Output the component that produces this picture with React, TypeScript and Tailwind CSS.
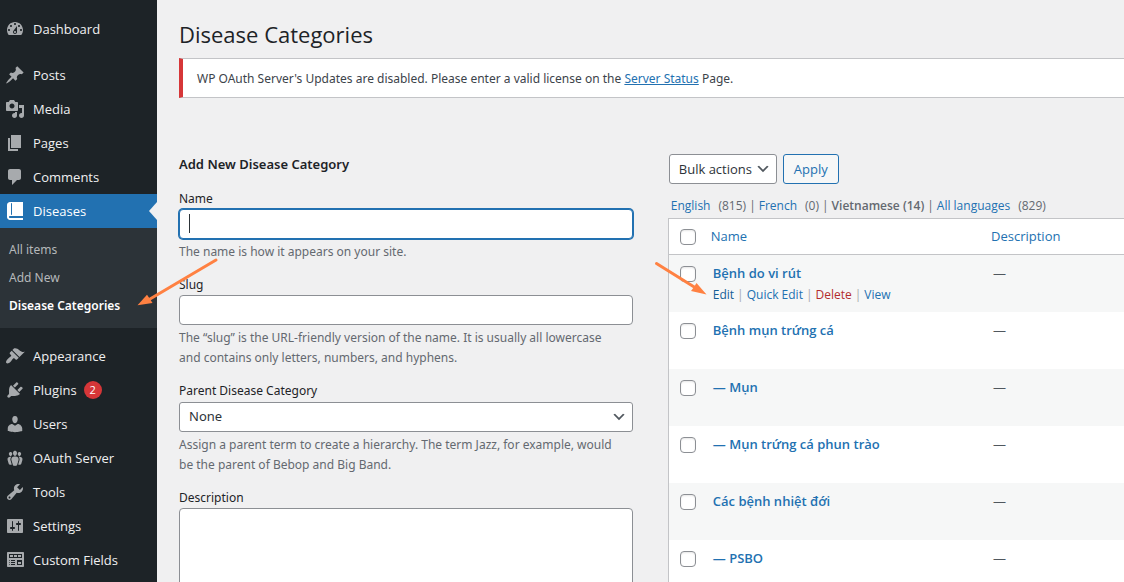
import type { ReactNode } from "react";

const icons = {
  dashboard:
    "M3.76 16h12.48c1.1-1.37 1.76-3.11 1.76-5 0-4.42-3.58-8-8-8s-8 3.58-8 8c0 1.89.66 3.63 1.76 5zM10 4c.55 0 1 .45 1 1s-.45 1-1 1-1-.45-1-1 .45-1 1-1zM6 6c.55 0 1 .45 1 1s-.45 1-1 1-1-.45-1-1 .45-1 1-1zm8 0c.55 0 1 .45 1 1s-.45 1-1 1-1-.45-1-1 .45-1 1-1zm-5.37 5.55L12 7v6c0 1.1-.9 2-2 2s-2-.9-2-2c0-.57.24-1.08.63-1.45zM4 10c.55 0 1 .45 1 1s-.45 1-1 1-1-.45-1-1 .45-1 1-1zm12 0c.55 0 1 .45 1 1s-.45 1-1 1-1-.45-1-1 .45-1 1-1zm-5 3c0-.55-.45-1-1-1s-1 .45-1 1 .45 1 1 1 1-.45 1-1z",
  post: "M10.44 3.02l1.82-1.82 6.36 6.35-1.83 1.82c-1.05-.68-2.48-.57-3.41.36l-.75.75c-.92.93-1.04 2.35-.35 3.41l-1.83 1.82-2.41-2.41-2.8 2.79c-.42.42-3.38 2.71-3.8 2.29s1.86-3.39 2.28-3.81l2.79-2.79L4.1 9.36l1.83-1.82c1.05.69 2.48.57 3.4-.36l.75-.75c.93-.92 1.05-2.35.36-3.41z",
  media:
    "M13 11V4c0-.55-.45-1-1-1h-1.67L9 1H5L3.67 3H2c-.55 0-1 .45-1 1v7c0 .55.45 1 1 1h10c.55 0 1-.45 1-1zM7 4.5c1.38 0 2.5 1.12 2.5 2.5S8.38 9.5 7 9.5 4.5 8.38 4.5 7 5.62 4.5 7 4.5zM14 6h5v10.5c0 1.38-1.12 2.5-2.5 2.5S14 17.88 14 16.5s1.12-2.5 2.5-2.5c.17 0 .34.02.5.05V9h-3V6zm-4 8.05V13h2v3.5c0 1.38-1.12 2.5-2.5 2.5S7 17.88 7 16.5 8.12 14 9.5 14c.17 0 .34.02.5.05z",
  page: "M6 15V2h10v13H6zm-1 1h8v2H3V5h2v11z",
  comments:
    "M5 2h9c1.1 0 2 .9 2 2v7c0 1.1-.9 2-2 2h-2l-5 5v-5H5c-1.1 0-2-.9-2-2V4c0-1.1.9-2 2-2z",
  book: "M5 17h13v2H5c-1.66 0-3-1.34-3-3V4c0-1.66 1.34-3 3-3h13v14H5c-.55 0-1 .45-1 1s.45 1 1 1zm2-3.5v-11c0-.28-.22-.5-.5-.5s-.5.22-.5.5v11c0 .28.22.5.5.5s.5-.22.5-.5z",
  appearance:
    "M14.48 11.06L7.41 3.99l1.5-1.5c.5-.56 2.3-.47 3.51.32 1.21.8 1.43 1.28 2.91 2.1 1.18.64 2.45 1.26 4.45.85zm-.71.71L6.7 4.7 4.93 6.47c-.39.39-.39 1.02 0 1.41l1.06 1.06c.39.39.39 1.03 0 1.42-.6.6-1.43 1.11-2.21 1.69-.35.26-.7.53-1.01.84C1.43 14.23.4 16.08 1.4 17.07c.99 1 2.84-.03 4.18-1.36.31-.31.58-.66.85-1.02.57-.78 1.08-1.61 1.69-2.21.39-.39 1.02-.39 1.41 0l1.06 1.06c.39.39 1.02.39 1.41 0z",
  plugins:
    "M13.11 4.36L9.87 7.6 8 5.73l3.24-3.24c.35-.34 1.05-.2 1.56.32.52.51.66 1.21.31 1.55zm-8 1.77l.91-1.12 9.01 9.01-1.19.84c-.71.71-2.63 1.16-3.82 1.16H6.14L4.9 17.26c-.59.59-1.54.59-2.12 0-.59-.58-.59-1.53 0-2.12l1.24-1.24v-3.88c0-1.13.4-3.19 1.09-3.89zm7.26 3.97l3.24-3.24c.34-.35 1.04-.21 1.55.31.52.51.66 1.21.31 1.55l-3.24 3.25z",
  users:
    "M10 9.25c-2.27 0-2.73-3.44-2.73-3.44C7 4.02 7.82 2 9.97 2c2.16 0 2.98 2.02 2.71 3.81 0 0-.41 3.44-2.68 3.44zm0 2.57L12.72 10c2.39 0 4.52 2.33 4.52 4.53v2.49s-3.65 1.13-7.24 1.13c-3.65 0-7.24-1.13-7.24-1.13v-2.49c0-2.25 1.94-4.48 4.47-4.48z",
  groups:
    "M8.03 4.46c-.29 1.28.55 3.46 1.97 3.46 1.41 0 2.25-2.18 1.96-3.46-.22-.98-1.08-1.63-1.96-1.63-.89 0-1.74.65-1.97 1.63zm-4.13.9c-.25 1.08.47 2.93 1.67 2.93s1.92-1.85 1.67-2.93c-.19-.83-.92-1.39-1.67-1.39s-1.48.56-1.67 1.39zm8.86 0c-.25 1.08.47 2.93 1.66 2.93 1.2 0 1.92-1.85 1.67-2.93-.19-.83-.92-1.39-1.67-1.39-.74 0-1.47.56-1.66 1.39zm-.59 11.43l1.25-4.3C14.2 10 12.71 8.47 10 8.47c-2.72 0-4.21 1.53-3.44 4.02l1.26 4.3C8.05 17.51 9 18 10 18c.98 0 1.94-.49 2.17-1.21zm-6.1-7.63c-.49.67-.96 1.83-.42 3.59l1.12 3.79c-.34.2-.77.31-1.2.31-.85 0-1.65-.41-1.85-1.03l-1.07-3.65c-.65-2.11.61-3.4 2.92-3.4.27 0 .54.02.79.06-.1.1-.2.22-.29.33zm8.35-.39c2.31 0 3.58 1.29 2.92 3.4l-1.07 3.65c-.2.62-1 1.03-1.85 1.03-.43 0-.86-.11-1.2-.31l1.11-3.77c.55-1.78.08-2.94-.42-3.61-.08-.11-.18-.23-.28-.33.25-.04.51-.06.79-.06z",
  tools:
    "M16.68 9.77c-1.34 1.34-3.3 1.67-4.95.99l-5.41 6.52c-.99.99-2.59.99-3.58 0s-.99-2.59 0-3.57l6.52-5.42c-.68-1.65-.35-3.61.99-4.95 1.28-1.28 3.12-1.62 4.72-1.06l-2.89 2.89 2.82 2.82 2.86-2.87c.53 1.58.18 3.39-1.08 4.65zM3.81 16.21c.4.39 1.04.39 1.43 0 .4-.4.4-1.04 0-1.43-.39-.4-1.03-.4-1.43 0-.39.39-.39 1.03 0 1.43z",
  settings:
    "M18 16V4c0-.55-.45-1-1-1H3c-.55 0-1 .45-1 1v12c0 .55.45 1 1 1h14c.55 0 1-.45 1-1zM8 11h1c.55 0 1 .45 1 1s-.45 1-1 1H8v1.5c0 .28-.22.5-.5.5s-.5-.22-.5-.5V13H6c-.55 0-1-.45-1-1s.45-1 1-1h1V5.5c0-.28.22-.5.5-.5s.5.22.5.5V11zm5-2h-1c-.55 0-1-.45-1-1s.45-1 1-1h1V5.5c0-.28.22-.5.5-.5s.5.22.5.5V7h1c.55 0 1 .45 1 1s-.45 1-1 1h-1v5.5c0 .28-.22.5-.5.5s-.5-.22-.5-.5V9z",
  fields:
    "M19 16V3c0-.55-.45-1-1-1H3c-.55 0-1 .45-1 1v13c0 .55.45 1 1 1h15c.55 0 1-.45 1-1zM4 4h13v4H4V4zm1 1v2h3V5H5zm4 0v2h3V5H9zm4 0v2h3V5h-3zm-8.5 5c.28 0 .5.22.5.5s-.22.5-.5.5-.5-.22-.5-.5.22-.5.5-.5zM6 10h4v1H6v-1zm6 0h5v5h-5v-5zm-7.5 2c.28 0 .5.22.5.5s-.22.5-.5.5-.5-.22-.5-.5.22-.5.5-.5zM6 12h4v1H6v-1zm7 0v2h3v-2h-3zm-8.5 2c.28 0 .5.22.5.5s-.22.5-.5.5-.5-.22-.5-.5.22-.5.5-.5zM6 14h4v1H6v-1z",
};

type IconName = keyof typeof icons;

function MenuItem({
  icon,
  label,
  count,
  current = false,
}: {
  icon: IconName;
  label: string;
  count?: number;
  current?: boolean;
}) {
  return (
    <a
      href="#"
      aria-current={current ? "true" : undefined}
      className={
        current
          ? "relative flex h-[34px] items-center gap-2 bg-[#2271b1] pl-[5px] text-white"
          : "flex h-[34px] items-center gap-2 pl-[5px] text-[#f0f0f1]"
      }
    >
      <svg
        viewBox="0 0 20 20"
        aria-hidden="true"
        fillRule="evenodd"
        className={current ? "size-5 fill-white" : "size-5 fill-[#a7aaad]"}
      >
        <path d={icons[icon]} />
      </svg>
      <span className="pt-0.5">{label}</span>
      {count !== undefined && (
        <span className="-ml-px flex size-[18px] items-center justify-center rounded-full bg-[#d63638] text-[11px] text-white">
          {count}
        </span>
      )}
      {current && (
        <span className="absolute top-2 right-0 border-y-[9px] border-r-8 border-y-transparent border-r-[#f0f0f1]" />
      )}
    </a>
  );
}

function Sidebar() {
  return (
    <nav className="w-[157px] shrink-0 bg-[#1d2327] pt-3 text-[13px]">
      <MenuItem icon="dashboard" label="Dashboard" />
      <div className="mt-3">
        <MenuItem icon="post" label="Posts" />
        <MenuItem icon="media" label="Media" />
        <MenuItem icon="page" label="Pages" />
        <MenuItem icon="comments" label="Comments" />
        <MenuItem icon="book" label="Diseases" current />
      </div>
      <ul className="bg-[#2c3338] pt-2 pb-2 pl-[9px] font-['Noto_Sans',sans-serif] text-xs leading-7 text-[#b5b8ba]">
        <li>
          <a href="#">All items</a>
        </li>
        <li>
          <a href="#">Add New</a>
        </li>
        <li>
          <a href="#" className="font-semibold text-white">
            Disease Categories
          </a>
        </li>
      </ul>
      <div className="mt-[11px]">
        <MenuItem icon="appearance" label="Appearance" />
        <MenuItem icon="plugins" label="Plugins" count={2} />
        <MenuItem icon="users" label="Users" />
        <MenuItem icon="groups" label="OAuth Server" />
        <MenuItem icon="tools" label="Tools" />
        <MenuItem icon="settings" label="Settings" />
        <MenuItem icon="fields" label="Custom Fields" />
      </div>
    </nav>
  );
}

function Chevron() {
  return (
    <svg
      viewBox="0 0 20 20"
      aria-hidden="true"
      className="pointer-events-none absolute right-1.5 bottom-[7px] size-4 fill-[#50575e]"
    >
      <path d="M5 6l5 5 5-5 2 1-7 7-7-7 2-1z" />
    </svg>
  );
}

function Field({
  id,
  label,
  help,
  children,
}: {
  id: string;
  label: string;
  help?: string;
  children: ReactNode;
}) {
  return (
    <div className="mb-[13px]">
      <label htmlFor={id} className="block leading-5 text-[#1d2327]">
        {label}
      </label>
      {children}
      {help && <p className="mt-[3px] w-[97%] leading-5 text-[#646970]">{help}</p>}
    </div>
  );
}

function AddForm() {
  return (
    <form className="pr-[35px] font-['Noto_Sans',sans-serif] text-xs">
      <h2 className="mb-[15px] text-[13px] leading-5 font-semibold text-[#1d2327]">
        Add New Disease Category
      </h2>
      <Field id="name" label="Name" help="The name is how it appears on your site.">
        <div className="relative">
          <input
            id="name"
            type="text"
            className="block h-[30px] w-full rounded border border-[#2271b1] bg-white px-2 ring-1 ring-[#2271b1] outline-none"
          />
          <span className="absolute top-[5px] left-2.5 h-[19px] w-px bg-[#2c3338]" />
        </div>
      </Field>
      <Field
        id="slug"
        label="Slug"
        help="The “slug” is the URL-friendly version of the name. It is usually all lowercase and contains only letters, numbers, and hyphens."
      >
        <input
          id="slug"
          type="text"
          className="block h-[30px] w-full rounded border border-[#8c8f94] bg-white px-2"
        />
      </Field>
      <Field
        id="parent"
        label="Parent Disease Category"
        help="Assign a parent term to create a hierarchy. The term Jazz, for example, would be the parent of Bebop and Big Band."
      >
        <div className="relative pt-px">
          <select
            id="parent"
            className="block h-[30px] w-full appearance-none rounded-[3px] border border-[#8c8f94] bg-white px-[9px] text-[13px] text-[#2c3338]"
          >
            <option>None</option>
          </select>
          <Chevron />
        </div>
      </Field>
      <Field id="description" label="Description">
        <textarea
          id="description"
          rows={5}
          className="block h-28 w-full resize-none rounded border border-[#8c8f94] bg-white px-2"
        />
      </Field>
    </form>
  );
}

function Check({ label }: { label: string }) {
  return (
    <input
      type="checkbox"
      aria-label={label}
      className="block size-4 appearance-none rounded border border-[#8c8f94] bg-white shadow-[inset_0_1px_2px_rgba(0,0,0,0.1)]"
    />
  );
}

const terms = [
  "Bệnh do vi rút",
  "Bệnh mụn trứng cá",
  "— Mụn",
  "— Mụn trứng cá phun trào",
  "Các bệnh nhiệt đới",
  "— PSBO",
];

function RowActions() {
  return (
    <div className="flex gap-[3px] pt-px text-xs leading-5 text-[#a7aaad]">
      <a href="#" className="text-[#135e96]">
        Edit
      </a>
      |
      <a href="#" className="text-[#2271b1]">
        Quick Edit
      </a>
      |
      <a href="#" className="text-[#b32d2e]">
        Delete
      </a>
      |
      <a href="#" className="text-[#2271b1]">
        View
      </a>
    </div>
  );
}

function TermList() {
  return (
    <section className="min-w-0">
      <div className="flex gap-1.5 pl-px text-[13px]">
        <div className="relative">
          <select
            aria-label="Bulk actions"
            className="block h-[30px] w-[108px] appearance-none rounded-[3px] border border-[#8c8f94] bg-white pt-px pl-[9px] text-[#2c3338]"
          >
            <option>Bulk actions</option>
          </select>
          <Chevron />
        </div>
        <button
          type="button"
          className="h-[30px] rounded-[3px] border border-[#2271b1] bg-[#f6f7f7] px-2.5 pt-px text-[#2271b1]"
        >
          Apply
        </button>
      </div>
      <div className="mt-3 mb-0.5 flex gap-[3px] pl-[3px] text-xs leading-5 whitespace-nowrap text-[#646970]">
        <span className="flex gap-2">
          <a href="#" className="text-[#2271b1]">
            English
          </a>
          <span>(815)</span>
        </span>
        <span>|</span>
        <span className="flex gap-2">
          <a href="#" className="text-[#2271b1]">
            French
          </a>
          <span>(0)</span>
        </span>
        <span>|</span>
        <span className="font-semibold">Vietnamese (14)</span>
        <span>|</span>
        <span className="flex gap-2">
          <a href="#" className="text-[#2271b1]">
            All languages
          </a>
          <span>(829)</span>
        </span>
      </div>
      <div className="border-t border-l border-[#c3c4c7] bg-white">
        <table className="w-full table-fixed border-separate border-spacing-0 text-left text-[13px] text-[#50575e]">
          <thead>
            <tr className="h-9 text-[#2271b1]">
              <th className="w-[34px] border-b border-[#c3c4c7] pl-[11px]">
                <Check label="Select all" />
              </th>
              <th className="w-[62%] border-b border-[#c3c4c7] pt-px pl-2 font-normal">
                <a href="#">Name</a>
              </th>
              <th className="border-b border-[#c3c4c7] pt-px pl-1.5 font-normal">
                <a href="#">Description</a>
              </th>
            </tr>
          </thead>
          <tbody>
            {terms.map((term, i) => (
              <tr key={term} className="h-[57px] align-top odd:bg-[#f6f7f7]">
                <td className="pt-[11px] pl-[11px]">
                  <Check label={`Select ${term}`} />
                </td>
                <td className="pt-[7px] pl-2.5">
                  <a href="#" className="block leading-[22px] font-semibold text-[#2271b1]">
                    {term}
                  </a>
                  {i === 0 && <RowActions />}
                </td>
                <td className="pt-[7px] pl-2 leading-[22px]">—</td>
              </tr>
            ))}
          </tbody>
        </table>
      </div>
    </section>
  );
}

export default function App() {
  return (
    <div className="relative flex h-screen overflow-hidden bg-[#f0f0f1] font-['Open_Sans','Noto_Sans',sans-serif]">
      <Sidebar />
      <main className="min-w-0 flex-1 pt-[19px] pl-[22px]">
        <h1 className="text-[22px] leading-[30px] text-[#1d2327]">Disease Categories</h1>
        <div className="mt-[9px] flex h-10 items-center border-y border-l-4 border-y-[#c3c4c7] border-l-[#d63638] bg-white pt-0.5 pl-3.5 font-['Noto_Sans',sans-serif] text-xs text-[#3c434a]">
          <p>
            WP OAuth Server's Updates are disabled. Please enter a valid license on the{" "}
            <a href="#" className="text-[#2271b1] underline">
              Server Status
            </a>{" "}
            Page.
          </p>
        </div>
        <div className="mt-14 grid grid-cols-[30fr_28fr]">
          <AddForm />
          <TermList />
        </div>
      </main>
      <svg
        viewBox="0 0 84 50"
        aria-hidden="true"
        className="pointer-events-none absolute top-[257px] left-[136px] h-[50px] w-[84px]"
      >
        <path d="M80 3L14 42" stroke="#ff8142" strokeWidth="3" strokeLinecap="round" />
        <path d="M1.500 48.300L11 37.800L14 42L16.500 46Z" fill="#ff8142" />
      </svg>
      <svg
        viewBox="0 0 56 38"
        aria-hidden="true"
        className="pointer-events-none absolute top-[260px] left-[653px] h-[38px] w-[56px]"
      >
        <path d="M3.500 3.500L42 27.500" stroke="#ff8142" strokeWidth="3" strokeLinecap="round" />
        <path d="M53.500 34.500L43.500 23L41 27L38 31Z" fill="#ff8142" />
      </svg>
    </div>
  );
}
